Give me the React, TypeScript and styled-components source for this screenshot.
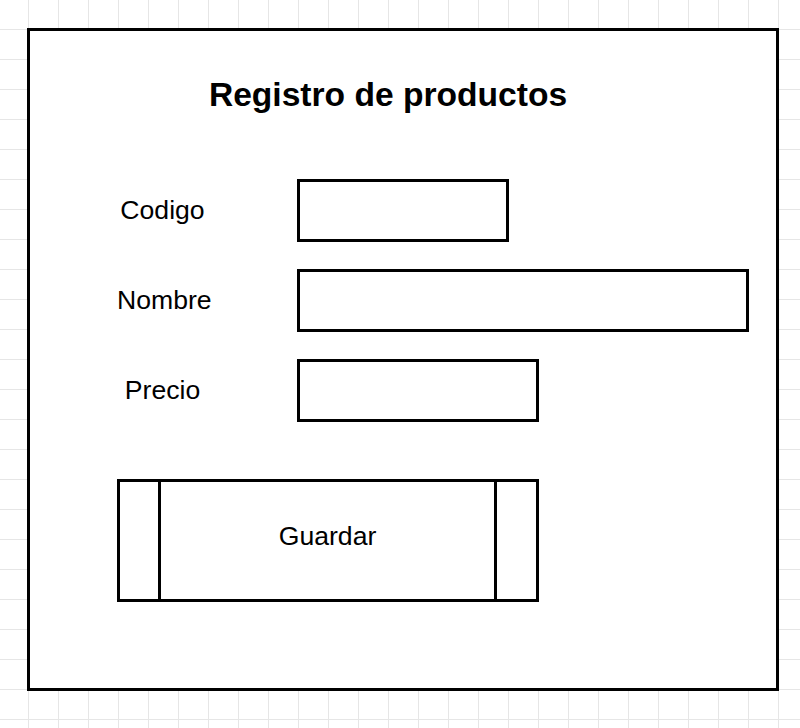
import React from "react";
import styled, { createGlobalStyle } from "styled-components";

const GlobalStyle = createGlobalStyle`
  html, body {
    margin: 0;
    padding: 0;
  }
  body {
    min-height: 728px;
    overflow: hidden;
    font-family: "Liberation Sans", Arial, sans-serif;
    color: #000;
    background-color: #ffffff;
    background-image:
      linear-gradient(to right, #e6e6e6 1px, transparent 1px),
      linear-gradient(to bottom, #e6e6e6 1px, transparent 1px);
    background-size: 30px 30px;
    background-position: 28px 29px;
  }
`;

const Page = styled.div`
  display: flex;
  padding: 28px 0 0 27px;
`;

const Frame = styled.section`
  box-sizing: border-box;
  width: 752px;
  height: 663px;
  border: 3px solid #000;
  background: #fff;
  padding-top: 47px;
  display: flex;
  flex-direction: column;
`;

const Title = styled.h1`
  margin: 0;
  padding-right: 30px;
  text-align: center;
  font-size: 33.6px;
  line-height: 34px;
  font-weight: 700;
`;

const Form = styled.div`
  margin-top: 67px;
  padding-left: 87px;
  display: grid;
  grid-template-columns: 91px 1fr;
  column-gap: 89px;
  row-gap: 27px;
  align-items: center;
`;

const Label = styled.label`
  text-align: center;
  font-size: 26.6px;
  white-space: nowrap;
`;

const Field = styled.input<{ $w: number }>`
  box-sizing: border-box;
  display: block;
  width: ${(p) => p.$w}px;
  height: 63px;
  margin: 0;
  padding: 0 10px;
  border: 3px solid #000;
  border-radius: 0;
  background: #fff;
  outline: none;
  font-family: inherit;
  font-size: 20px;
`;

const SaveButton = styled.button`
  box-sizing: border-box;
  margin: 57px 0 0 87px;
  width: 422px;
  height: 123px;
  padding: 0;
  border: 3px solid #000;
  border-radius: 0;
  background: #fff;
  display: grid;
  grid-template-columns: 38px 1fr 39px;
  font-family: inherit;
  color: #000;
  cursor: pointer;
`;

const Side = styled.span``;

const Caption = styled.span`
  border-left: 3px solid #000;
  border-right: 3px solid #000;
  display: flex;
  align-items: center;
  justify-content: center;
  padding-bottom: 8px;
  font-size: 26.6px;
`;

export default function App() {
  return (
    <>
      <GlobalStyle />
      <Page>
        <Frame>
          <Title>Registro de productos</Title>
          <Form>
            <Label htmlFor="codigo">Codigo</Label>
            <Field id="codigo" $w={212} />
            <Label htmlFor="nombre">Nombre</Label>
            <Field id="nombre" $w={452} />
            <Label htmlFor="precio">Precio</Label>
            <Field id="precio" $w={242} />
          </Form>
          <SaveButton type="button">
            <Side />
            <Caption>Guardar</Caption>
            <Side />
          </SaveButton>
        </Frame>
      </Page>
    </>
  );
}
